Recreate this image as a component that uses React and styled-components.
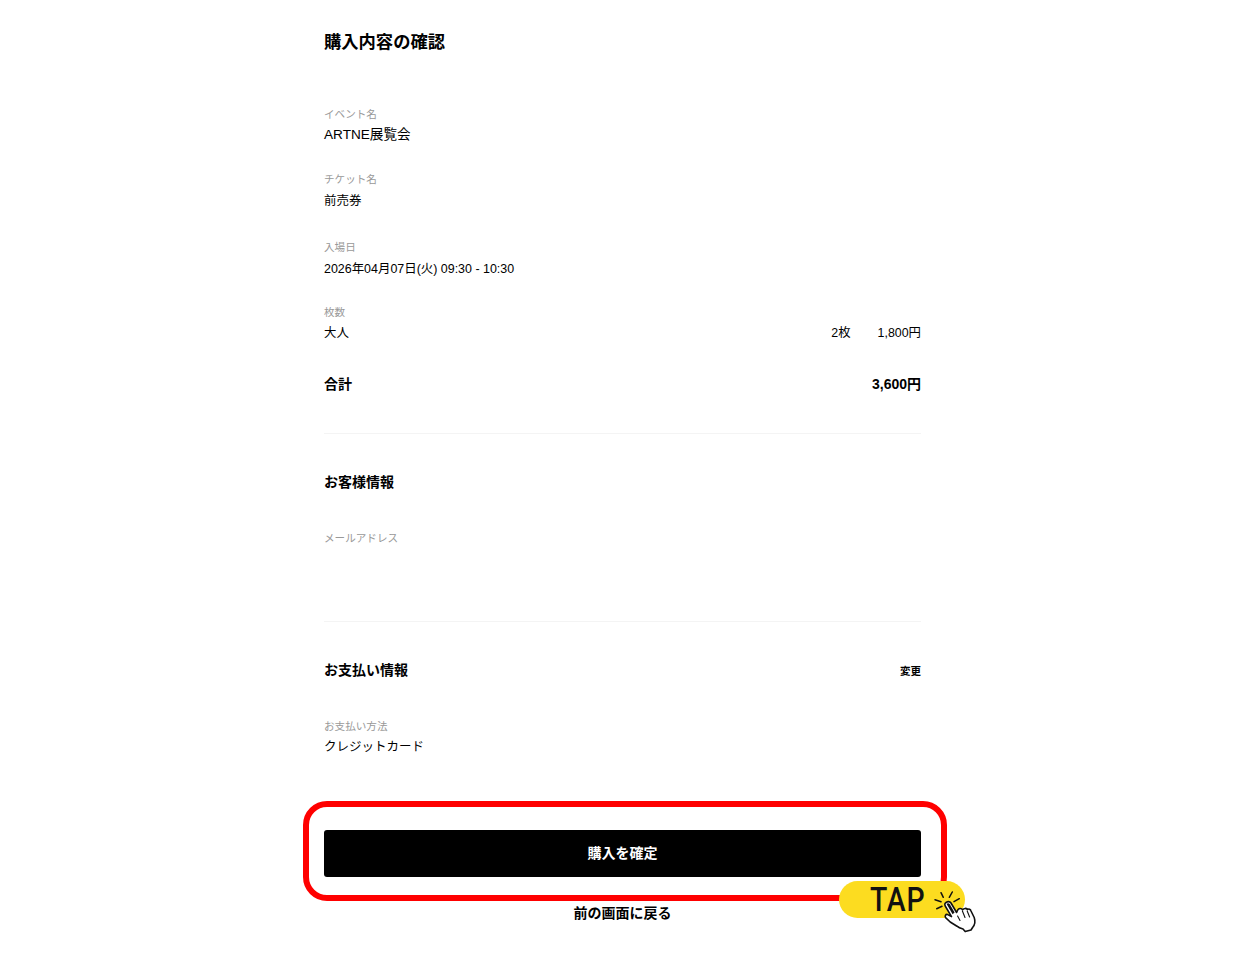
import React from "react";
import styled, { createGlobalStyle } from "styled-components";

const Global = createGlobalStyle`
  html, body { margin: 0; padding: 0; background: #fff; }
  body { font-family: "Liberation Sans", "Noto Sans CJK JP", sans-serif; color: #000; }
`;

const Page = styled.main`
  width: 597px;
  height: 979px;
  margin: 0 0 0 324px;
  padding-top: 30px;
  box-sizing: border-box;
`;
const Title = styled.h1`
  margin: 0 0 52px;
  font-size: 17.3px;
  line-height: 24px;
  font-weight: 700;
`;
const Field = styled.section`
  height: ${(p) => p.$h}px;
`;
const Label = styled.div`
  font-size: 10.6px;
  line-height: 16px;
  color: #999;
`;
const Value = styled.div`
  margin-top: ${(p) => p.$gap}px;
  font-size: ${(p) => p.$size || 12.5}px;
  line-height: 20px;
`;
const SpacedRow = styled.div`
  display: flex;
  justify-content: space-between;
  align-items: center;
  margin-top: 3px;
  font-size: 12.4px;
  line-height: 20px;
`;
const Amounts = styled.div`
  display: flex;
  gap: 27px;
`;
const TotalRow = styled.div`
  display: flex;
  justify-content: space-between;
  font-size: 14px;
  line-height: 20px;
  font-weight: 700;
  margin-bottom: 39px;
`;
const Divider = styled.hr`
  margin: ${(p) => p.$top || 0}px 0 0;
  border: 0;
  border-top: 1px solid #f4f4f4;
`;
const SectionHead = styled.div`
  display: flex;
  justify-content: space-between;
  align-items: center;
  height: 24px;
  margin-top: ${(p) => p.$top}px;
  margin-bottom: ${(p) => p.$bottom}px;
`;
const SectionTitle = styled.h2`
  margin: 0;
  font-size: 14px;
  line-height: 24px;
  font-weight: 700;
`;
const ChangeLink = styled.a`
  font-size: 10.5px;
  font-weight: 700;
  color: #000;
`;
const ActionArea = styled.div`
  position: relative;
  margin-top: 73px;
`;
const Confirm = styled.button`
  display: block;
  width: 100%;
  height: 47px;
  padding: 0 0 1px;
  border: 0;
  border-radius: 3px;
  background: #000;
  color: #fff;
  font: 700 14px/46px "Liberation Sans", "Noto Sans CJK JP", sans-serif;
`;
const BackLink = styled.a`
  display: block;
  margin-top: 26px;
  text-align: center;
  font-size: 14px;
  line-height: 20px;
  font-weight: 700;
  color: #000;
`;
const Highlight = styled.div`
  position: absolute;
  left: -21px;
  top: -29px;
  width: 644px;
  height: 100px;
  box-sizing: border-box;
  border: 6px solid #ff0000;
  border-radius: 24px;
  pointer-events: none;
`;
const TapBadge = styled.div`
  position: absolute;
  left: 515px;
  top: 51px;
  width: 126px;
  height: 37px;
  border-radius: 18.5px;
  background: #fcdc20;
  box-sizing: border-box;
  padding-left: 31px;
  color: #111;
`;
const TapWord = styled.span`
  display: inline-block;
  font: 500 33px/37px Roboto, "Liberation Sans", sans-serif;
  letter-spacing: 1px;
  transform: scaleX(0.86);
  transform-origin: left center;
`;
const TapHand = styled.svg`
  position: absolute;
  left: 91px;
  top: 7px;
  width: 50px;
  height: 50px;
`;

function Hand() {
  return (
    <TapHand viewBox="0 0 50 50" fill="none">
      <g stroke="#111" strokeWidth="1.5" strokeLinecap="round">
        <path d="M11 4.7 L13.3 9.3" />
        <path d="M22.3 4 L19.3 9.3" />
        <path d="M5 11.7 L11 13.7" />
        <path d="M6.7 20.7 L12 18.3" />
        <path d="M24 13.7 L29.3 10.7" />
      </g>
      <path
        d="M15 15.5 C16.5 13.2 19.8 13 21 15 L26.6 24.5 L28 21.5 C29.5 20 31.5 20.2 32.6 21.8 C34 20 36.2 20 37.4 21.6 C38.8 20.5 40.5 21.2 41 23 L44.2 29.5 C45.4 33 45.2 36.5 42.6 39.5 L41 42 L35.2 43.6 L33 41 C30.5 40.4 28.5 39.6 27 38.2 L20.2 34 L15.6 29.6 C14.6 28 15.6 26.2 17.2 26.4 L21.5 28.6 L15.2 18 C14.8 17.2 14.7 16.2 15 15.5 Z"
        fill="#fff"
        stroke="#111"
        strokeWidth="1.6"
        strokeLinejoin="round"
      />
      <path d="M16.6 16 C17.4 15 19 15 19.8 16.2 L24.6 24.6 L22.6 26.2 Z" fill="#111" />
      <path d="M27.6 28 L30 32.5 M32.4 23 L35 29.5 M37.2 23 L39.6 29" stroke="#111" strokeWidth="1.1" strokeLinecap="round" />
    </TapHand>
  );
}

export default function App() {
  return (
    <>
      <Global />
      <Page>
        <Title>購入内容の確認</Title>
        <Field $h={65}>
          <Label>イベント名</Label>
          <Value $gap={3} $size={13.6}>ARTNE展覧会</Value>
        </Field>
        <Field $h={68}>
          <Label>チケット名</Label>
          <Value $gap={4}>前売券</Value>
        </Field>
        <Field $h={65}>
          <Label>入場日</Label>
          <Value $gap={4} $size={12.45}>2026年04月07日(火) 09:30 - 10:30</Value>
        </Field>
        <Field $h={70}>
          <Label>枚数</Label>
          <SpacedRow>
            <span>大人</span>
            <Amounts>
              <span>2枚</span>
              <span>1,800円</span>
            </Amounts>
          </SpacedRow>
        </Field>
        <TotalRow>
          <span>合計</span>
          <span>3,600円</span>
        </TotalRow>
        <Divider />
        <SectionHead $top={36} $bottom={36}>
          <SectionTitle>お客様情報</SectionTitle>
        </SectionHead>
        <Label>メールアドレス</Label>
        <Divider $top={75} />
        <SectionHead $top={36} $bottom={36}>
          <SectionTitle>お支払い情報</SectionTitle>
          <ChangeLink>変更</ChangeLink>
        </SectionHead>
        <Label>お支払い方法</Label>
        <Value $gap={3}>クレジットカード</Value>
        <ActionArea>
          <Confirm>購入を確定</Confirm>
          <Highlight />
          <TapBadge>
            <TapWord>TAP</TapWord>
            <Hand />
          </TapBadge>
          <BackLink>前の画面に戻る</BackLink>
        </ActionArea>
      </Page>
    </>
  );
}
